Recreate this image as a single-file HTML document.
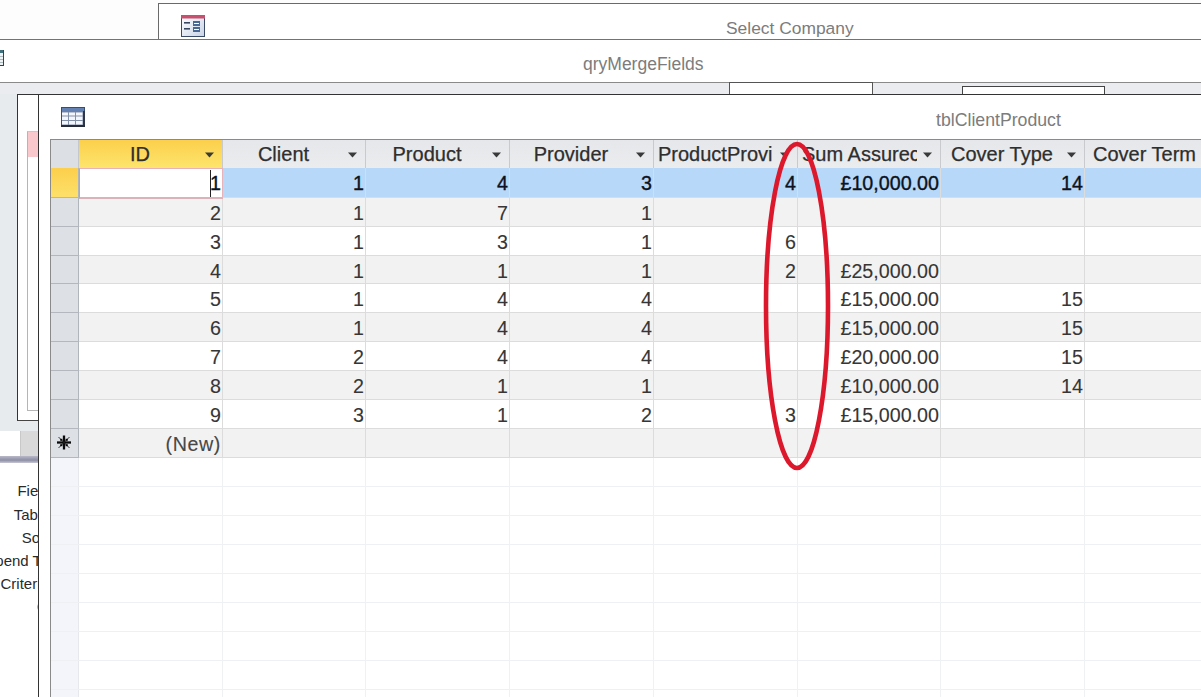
<!DOCTYPE html>
<html><head><meta charset="utf-8"><style>
*{margin:0;padding:0;box-sizing:border-box}
html,body{width:1201px;height:697px;overflow:hidden;background:#fff}
body{position:relative;font-family:"Liberation Sans",sans-serif}
.a{position:absolute}
.t{position:absolute;white-space:nowrap;line-height:1}
.h{font-size:20px;color:#2e2e2e;-webkit-text-stroke:0.25px #2e2e2e}
.d{font-size:19.7px;color:#363636;-webkit-text-stroke:0.1px #363636}
.ds{color:#0c1220;-webkit-text-stroke:0.35px #0c1220}
.ttl{font-size:17.5px;color:#7c7c7c}
</style></head><body>

<div class="a" style="left:0;top:0;width:1201px;height:39px;background:#fdfdfd"></div>
<div class="a" style="left:158px;top:3px;width:1043px;height:36px;background:#fff;border-left:1px solid #6a6a6a;border-top:1px solid #6a6a6a"></div>
<svg class="a" style="left:181px;top:15px" width="24" height="22" viewBox="0 0 24 22">
<defs><linearGradient id="fg" x1="0" y1="0" x2="1" y2="1"><stop offset="0" stop-color="#ffffff"/><stop offset="1" stop-color="#c9d3e6"/></linearGradient></defs>
<rect x="0.5" y="0.5" width="23" height="21" fill="url(#fg)" stroke="#3a4a66"/>
<rect x="0" y="0" width="24" height="3.5" fill="#c8506e"/>
<rect x="3" y="7" width="6" height="1.6" fill="#3a4660"/>
<rect x="3" y="13" width="6" height="1.6" fill="#3a4660"/>
<rect x="12" y="6" width="7" height="5" fill="#4a6894"/><rect x="13" y="8" width="5" height="1" fill="#fff"/>
<rect x="12" y="12" width="7" height="5" fill="#4a6894"/><rect x="13" y="14" width="5" height="1" fill="#fff"/>
</svg>
<div class="t ttl" style="left:726px;top:20px;font-size:17.4px">Select Company</div>
<div class="a" style="left:0;top:39px;width:1201px;height:1px;background:#737373"></div>
<svg class="a" style="left:0;top:50px" width="4" height="16" viewBox="0 0 4 16">
<rect x="0" y="0" width="4" height="16" fill="#eef2f4"/>
<rect x="0" y="0" width="4" height="3" fill="#41707c"/>
<rect x="0" y="6" width="3" height="0.8" fill="#9aaab2"/><rect x="0" y="9" width="3" height="0.8" fill="#9aaab2"/><rect x="0" y="12" width="3" height="0.8" fill="#9aaab2"/>
<rect x="3" y="0" width="1" height="16" fill="#2c4650"/><rect x="0" y="15" width="4" height="1" fill="#2c4650"/>
</svg>
<div class="t ttl" style="left:583px;top:55.5px">qryMergeFields</div>
<div class="a" style="left:0;top:82px;width:1201px;height:1px;background:#8a8a8a"></div>
<div class="a" style="left:0;top:83px;width:1201px;height:11px;background:#eaecef"></div>
<div class="a" style="left:729px;top:82px;width:144px;height:13px;background:#fff;border:1px solid #555"></div>
<div class="a" style="left:962px;top:86px;width:143px;height:9px;background:#fff;border:1px solid #444;border-bottom:none"></div>
<div class="a" style="left:0;top:94px;width:38px;height:337px;background:#e8ebee"></div>
<div class="a" style="left:17px;top:94px;width:22px;height:327px;background:#fff;border-left:1px solid #333;border-top:1px solid #333;border-bottom:1px solid #444"></div>
<div class="a" style="left:27px;top:131px;width:12px;height:280px;border-left:1px solid #b5b5b5;border-top:1px solid #c8c8c8;border-bottom:1px solid #b5b5b5"></div>
<div class="a" style="left:28px;top:132px;width:10px;height:25px;background:#f8c8cc"></div>
<div class="a" style="left:0;top:431px;width:21px;height:25px;background:#fff;border-right:1px solid #c8c8c8"></div>
<div class="a" style="left:21px;top:431px;width:17px;height:25px;background:#d9d9d9"></div>
<div class="a" style="left:0;top:456px;width:38px;height:7px;background:linear-gradient(#b8b8c8,#8e8ea6 60%,#c8c8d4)"></div>
<div class="a" style="left:0;top:463px;width:38px;height:234px;overflow:hidden">
<div class="t" style="left:17.4px;top:20px;font-size:15px;color:#2a2a2a">Field:</div>
<div class="t" style="left:13.7px;top:44px;font-size:15px;color:#2a2a2a">Table:</div>
<div class="t" style="left:21.8px;top:67px;font-size:15px;color:#2a2a2a">Sort:</div>
<div class="t" style="left:-23px;top:90px;font-size:15px;color:#2a2a2a">Append To:</div>
<div class="t" style="left:0.5px;top:113px;font-size:15px;color:#2a2a2a">Criteria:</div>
<div class="t" style="left:37px;top:135px;font-size:15px;color:#2a2a2a">or:</div>
</div>
<div class="a" style="left:38px;top:94px;width:1163px;height:603px;background:#fff;border-left:1px solid #333;border-top:1px solid #333"></div>
<svg class="a" style="left:61px;top:107px" width="24" height="20" viewBox="0 0 24 20">
<rect x="0" y="0" width="24" height="20" fill="#3a4d6e"/>
<rect x="1" y="5" width="21" height="13" fill="#8391a8"/>
<rect x="1" y="1" width="22" height="4" fill="#6381b2"/>
<g fill="#f3f6fc">
<rect x="1" y="5.5" width="6" height="3"/><rect x="8" y="5.5" width="6" height="3"/><rect x="15" y="5.5" width="6.5" height="3"/>
<rect x="1" y="9.5" width="6" height="3.5"/><rect x="8" y="9.5" width="6" height="3.5"/><rect x="15" y="9.5" width="6.5" height="3.5"/>
<rect x="1" y="14" width="6" height="3.5"/><rect x="8" y="14" width="6" height="3.5"/><rect x="15" y="14" width="6.5" height="3.5"/>
</g><rect x="22" y="4" width="2" height="16" fill="#2e3648"/><rect x="0" y="18" width="24" height="2" fill="#262c3a"/></svg>
<div class="t ttl" style="left:936px;top:111.5px;font-size:17.7px">tblClientProduct</div>
<div class="a" style="left:50px;top:139px;width:1151px;height:558px;background:#fff;border-left:1px solid #8a8a8a;border-top:1px solid #8a8a8a"></div>
<div class="a" style="left:51px;top:458px;width:28px;height:239px;background:#f4f5fb;border-right:1px solid #e6e8ee"></div>
<div class="a" style="left:51px;top:140px;width:28px;height:28px;background:#dcdfe4;border-right:1px solid #c4c7cc"></div>
<div class="a" style="left:79px;top:140px;width:144px;height:28px;background:linear-gradient(#fccf4c,#fde56c);border-right:1px solid #c8cacd;overflow:hidden">
<div class="t h" style="left:0;width:122px;text-align:center;top:4px">ID</div>
<svg class="a" style="left:126px;top:12px" width="9" height="6"><path d="M0 0.5H9L4.5 5.5Z" fill="#3a3a3a"/></svg>
</div>
<div class="a" style="left:223px;top:140px;width:143px;height:28px;background:linear-gradient(#e5e7ea,#ebecee);border-right:1px solid #c8cacd;overflow:hidden">
<div class="t h" style="left:0;width:121px;text-align:center;top:4px">Client</div>
<svg class="a" style="left:125px;top:12px" width="9" height="6"><path d="M0 0.5H9L4.5 5.5Z" fill="#3a3a3a"/></svg>
</div>
<div class="a" style="left:366px;top:140px;width:144px;height:28px;background:linear-gradient(#e5e7ea,#ebecee);border-right:1px solid #c8cacd;overflow:hidden">
<div class="t h" style="left:0;width:122px;text-align:center;top:4px">Product</div>
<svg class="a" style="left:126px;top:12px" width="9" height="6"><path d="M0 0.5H9L4.5 5.5Z" fill="#3a3a3a"/></svg>
</div>
<div class="a" style="left:510px;top:140px;width:144px;height:28px;background:linear-gradient(#e5e7ea,#ebecee);border-right:1px solid #c8cacd;overflow:hidden">
<div class="t h" style="left:0;width:122px;text-align:center;top:4px">Provider</div>
<svg class="a" style="left:126px;top:12px" width="9" height="6"><path d="M0 0.5H9L4.5 5.5Z" fill="#3a3a3a"/></svg>
</div>
<div class="a" style="left:654px;top:140px;width:144px;height:28px;background:linear-gradient(#e5e7ea,#ebecee);border-right:1px solid #c8cacd;overflow:hidden">
<div class="a" style="left:0;top:0;width:120px;height:28px;overflow:hidden"><div class="t h" style="left:4px;top:4px">ProductProvi</div></div>
<svg class="a" style="left:126px;top:12px" width="9" height="6"><path d="M0 0.5H9L4.5 5.5Z" fill="#3a3a3a"/></svg>
</div>
<div class="a" style="left:798px;top:140px;width:143px;height:28px;background:linear-gradient(#e5e7ea,#ebecee);border-right:1px solid #c8cacd;overflow:hidden">
<div class="a" style="left:0;top:0;width:119px;height:28px;overflow:hidden"><div class="t h" style="left:4px;top:4px">Sum Assurec</div></div>
<svg class="a" style="left:125px;top:12px" width="9" height="6"><path d="M0 0.5H9L4.5 5.5Z" fill="#3a3a3a"/></svg>
</div>
<div class="a" style="left:941px;top:140px;width:144px;height:28px;background:linear-gradient(#e5e7ea,#ebecee);border-right:1px solid #c8cacd;overflow:hidden">
<div class="t h" style="left:0;width:122px;text-align:center;top:4px">Cover Type</div>
<svg class="a" style="left:126px;top:12px" width="9" height="6"><path d="M0 0.5H9L4.5 5.5Z" fill="#3a3a3a"/></svg>
</div>
<div class="a" style="left:1085px;top:140px;width:144px;height:28px;background:linear-gradient(#e5e7ea,#ebecee);border-right:1px solid #c8cacd;overflow:hidden">
<div class="t h" style="left:0;width:119px;text-align:center;top:4px">Cover Term</div>
</div>
<div class="a" style="left:51px;top:168px;width:28px;height:30px;background:linear-gradient(#fccf4c,#fde06a);border-right:1px solid #b0b4bb;border-bottom:1px solid #b4b8be"></div>
<div class="a" style="left:79px;top:168px;width:1122px;height:30px;background:#b7d8f8;border-bottom:1px solid #dcdcdc"></div>
<div class="a" style="left:222px;top:168px;width:1px;height:30px;background:#dcdcdc"></div>
<div class="a" style="left:365px;top:168px;width:1px;height:30px;background:#dcdcdc"></div>
<div class="a" style="left:509px;top:168px;width:1px;height:30px;background:#dcdcdc"></div>
<div class="a" style="left:653px;top:168px;width:1px;height:30px;background:#dcdcdc"></div>
<div class="a" style="left:797px;top:168px;width:1px;height:30px;background:#dcdcdc"></div>
<div class="a" style="left:940px;top:168px;width:1px;height:30px;background:#dcdcdc"></div>
<div class="a" style="left:1084px;top:168px;width:1px;height:30px;background:#dcdcdc"></div>
<div class="a" style="left:1228px;top:168px;width:1px;height:30px;background:#dcdcdc"></div>
<div class="t d ds" style="right:980px;top:174px">1</div>
<div class="t d ds" style="right:837px;top:174px">1</div>
<div class="t d ds" style="right:693px;top:174px">4</div>
<div class="t d ds" style="right:549px;top:174px">3</div>
<div class="t d ds" style="right:405px;top:174px">4</div>
<div class="t d ds" style="right:262px;top:174px">£10,000.00</div>
<div class="t d ds" style="right:118px;top:174px">14</div>
<div class="a" style="left:51px;top:198px;width:28px;height:29px;background:#dde1e6;border-right:1px solid #b0b4bb;border-bottom:1px solid #b4b8be"></div>
<div class="a" style="left:79px;top:198px;width:1122px;height:29px;background:#f2f2f2;border-bottom:1px solid #dcdcdc"></div>
<div class="a" style="left:222px;top:198px;width:1px;height:29px;background:#dcdcdc"></div>
<div class="a" style="left:365px;top:198px;width:1px;height:29px;background:#dcdcdc"></div>
<div class="a" style="left:509px;top:198px;width:1px;height:29px;background:#dcdcdc"></div>
<div class="a" style="left:653px;top:198px;width:1px;height:29px;background:#dcdcdc"></div>
<div class="a" style="left:797px;top:198px;width:1px;height:29px;background:#dcdcdc"></div>
<div class="a" style="left:940px;top:198px;width:1px;height:29px;background:#dcdcdc"></div>
<div class="a" style="left:1084px;top:198px;width:1px;height:29px;background:#dcdcdc"></div>
<div class="a" style="left:1228px;top:198px;width:1px;height:29px;background:#dcdcdc"></div>
<div class="t d" style="right:980px;top:204px">2</div>
<div class="t d" style="right:837px;top:204px">1</div>
<div class="t d" style="right:693px;top:204px">7</div>
<div class="t d" style="right:549px;top:204px">1</div>
<div class="a" style="left:51px;top:227px;width:28px;height:29px;background:#dde1e6;border-right:1px solid #b0b4bb;border-bottom:1px solid #b4b8be"></div>
<div class="a" style="left:79px;top:227px;width:1122px;height:29px;background:#ffffff;border-bottom:1px solid #dcdcdc"></div>
<div class="a" style="left:222px;top:227px;width:1px;height:29px;background:#dcdcdc"></div>
<div class="a" style="left:365px;top:227px;width:1px;height:29px;background:#dcdcdc"></div>
<div class="a" style="left:509px;top:227px;width:1px;height:29px;background:#dcdcdc"></div>
<div class="a" style="left:653px;top:227px;width:1px;height:29px;background:#dcdcdc"></div>
<div class="a" style="left:797px;top:227px;width:1px;height:29px;background:#dcdcdc"></div>
<div class="a" style="left:940px;top:227px;width:1px;height:29px;background:#dcdcdc"></div>
<div class="a" style="left:1084px;top:227px;width:1px;height:29px;background:#dcdcdc"></div>
<div class="a" style="left:1228px;top:227px;width:1px;height:29px;background:#dcdcdc"></div>
<div class="t d" style="right:980px;top:233px">3</div>
<div class="t d" style="right:837px;top:233px">1</div>
<div class="t d" style="right:693px;top:233px">3</div>
<div class="t d" style="right:549px;top:233px">1</div>
<div class="t d" style="right:405px;top:233px">6</div>
<div class="a" style="left:51px;top:256px;width:28px;height:28px;background:#dde1e6;border-right:1px solid #b0b4bb;border-bottom:1px solid #b4b8be"></div>
<div class="a" style="left:79px;top:256px;width:1122px;height:28px;background:#f2f2f2;border-bottom:1px solid #dcdcdc"></div>
<div class="a" style="left:222px;top:256px;width:1px;height:28px;background:#dcdcdc"></div>
<div class="a" style="left:365px;top:256px;width:1px;height:28px;background:#dcdcdc"></div>
<div class="a" style="left:509px;top:256px;width:1px;height:28px;background:#dcdcdc"></div>
<div class="a" style="left:653px;top:256px;width:1px;height:28px;background:#dcdcdc"></div>
<div class="a" style="left:797px;top:256px;width:1px;height:28px;background:#dcdcdc"></div>
<div class="a" style="left:940px;top:256px;width:1px;height:28px;background:#dcdcdc"></div>
<div class="a" style="left:1084px;top:256px;width:1px;height:28px;background:#dcdcdc"></div>
<div class="a" style="left:1228px;top:256px;width:1px;height:28px;background:#dcdcdc"></div>
<div class="t d" style="right:980px;top:262px">4</div>
<div class="t d" style="right:837px;top:262px">1</div>
<div class="t d" style="right:693px;top:262px">1</div>
<div class="t d" style="right:549px;top:262px">1</div>
<div class="t d" style="right:405px;top:262px">2</div>
<div class="t d" style="right:262px;top:262px">£25,000.00</div>
<div class="a" style="left:51px;top:284px;width:28px;height:29px;background:#dde1e6;border-right:1px solid #b0b4bb;border-bottom:1px solid #b4b8be"></div>
<div class="a" style="left:79px;top:284px;width:1122px;height:29px;background:#ffffff;border-bottom:1px solid #dcdcdc"></div>
<div class="a" style="left:222px;top:284px;width:1px;height:29px;background:#dcdcdc"></div>
<div class="a" style="left:365px;top:284px;width:1px;height:29px;background:#dcdcdc"></div>
<div class="a" style="left:509px;top:284px;width:1px;height:29px;background:#dcdcdc"></div>
<div class="a" style="left:653px;top:284px;width:1px;height:29px;background:#dcdcdc"></div>
<div class="a" style="left:797px;top:284px;width:1px;height:29px;background:#dcdcdc"></div>
<div class="a" style="left:940px;top:284px;width:1px;height:29px;background:#dcdcdc"></div>
<div class="a" style="left:1084px;top:284px;width:1px;height:29px;background:#dcdcdc"></div>
<div class="a" style="left:1228px;top:284px;width:1px;height:29px;background:#dcdcdc"></div>
<div class="t d" style="right:980px;top:290px">5</div>
<div class="t d" style="right:837px;top:290px">1</div>
<div class="t d" style="right:693px;top:290px">4</div>
<div class="t d" style="right:549px;top:290px">4</div>
<div class="t d" style="right:262px;top:290px">£15,000.00</div>
<div class="t d" style="right:118px;top:290px">15</div>
<div class="a" style="left:51px;top:313px;width:28px;height:29px;background:#dde1e6;border-right:1px solid #b0b4bb;border-bottom:1px solid #b4b8be"></div>
<div class="a" style="left:79px;top:313px;width:1122px;height:29px;background:#f2f2f2;border-bottom:1px solid #dcdcdc"></div>
<div class="a" style="left:222px;top:313px;width:1px;height:29px;background:#dcdcdc"></div>
<div class="a" style="left:365px;top:313px;width:1px;height:29px;background:#dcdcdc"></div>
<div class="a" style="left:509px;top:313px;width:1px;height:29px;background:#dcdcdc"></div>
<div class="a" style="left:653px;top:313px;width:1px;height:29px;background:#dcdcdc"></div>
<div class="a" style="left:797px;top:313px;width:1px;height:29px;background:#dcdcdc"></div>
<div class="a" style="left:940px;top:313px;width:1px;height:29px;background:#dcdcdc"></div>
<div class="a" style="left:1084px;top:313px;width:1px;height:29px;background:#dcdcdc"></div>
<div class="a" style="left:1228px;top:313px;width:1px;height:29px;background:#dcdcdc"></div>
<div class="t d" style="right:980px;top:319px">6</div>
<div class="t d" style="right:837px;top:319px">1</div>
<div class="t d" style="right:693px;top:319px">4</div>
<div class="t d" style="right:549px;top:319px">4</div>
<div class="t d" style="right:262px;top:319px">£15,000.00</div>
<div class="t d" style="right:118px;top:319px">15</div>
<div class="a" style="left:51px;top:342px;width:28px;height:29px;background:#dde1e6;border-right:1px solid #b0b4bb;border-bottom:1px solid #b4b8be"></div>
<div class="a" style="left:79px;top:342px;width:1122px;height:29px;background:#ffffff;border-bottom:1px solid #dcdcdc"></div>
<div class="a" style="left:222px;top:342px;width:1px;height:29px;background:#dcdcdc"></div>
<div class="a" style="left:365px;top:342px;width:1px;height:29px;background:#dcdcdc"></div>
<div class="a" style="left:509px;top:342px;width:1px;height:29px;background:#dcdcdc"></div>
<div class="a" style="left:653px;top:342px;width:1px;height:29px;background:#dcdcdc"></div>
<div class="a" style="left:797px;top:342px;width:1px;height:29px;background:#dcdcdc"></div>
<div class="a" style="left:940px;top:342px;width:1px;height:29px;background:#dcdcdc"></div>
<div class="a" style="left:1084px;top:342px;width:1px;height:29px;background:#dcdcdc"></div>
<div class="a" style="left:1228px;top:342px;width:1px;height:29px;background:#dcdcdc"></div>
<div class="t d" style="right:980px;top:348px">7</div>
<div class="t d" style="right:837px;top:348px">2</div>
<div class="t d" style="right:693px;top:348px">4</div>
<div class="t d" style="right:549px;top:348px">4</div>
<div class="t d" style="right:262px;top:348px">£20,000.00</div>
<div class="t d" style="right:118px;top:348px">15</div>
<div class="a" style="left:51px;top:371px;width:28px;height:29px;background:#dde1e6;border-right:1px solid #b0b4bb;border-bottom:1px solid #b4b8be"></div>
<div class="a" style="left:79px;top:371px;width:1122px;height:29px;background:#f2f2f2;border-bottom:1px solid #dcdcdc"></div>
<div class="a" style="left:222px;top:371px;width:1px;height:29px;background:#dcdcdc"></div>
<div class="a" style="left:365px;top:371px;width:1px;height:29px;background:#dcdcdc"></div>
<div class="a" style="left:509px;top:371px;width:1px;height:29px;background:#dcdcdc"></div>
<div class="a" style="left:653px;top:371px;width:1px;height:29px;background:#dcdcdc"></div>
<div class="a" style="left:797px;top:371px;width:1px;height:29px;background:#dcdcdc"></div>
<div class="a" style="left:940px;top:371px;width:1px;height:29px;background:#dcdcdc"></div>
<div class="a" style="left:1084px;top:371px;width:1px;height:29px;background:#dcdcdc"></div>
<div class="a" style="left:1228px;top:371px;width:1px;height:29px;background:#dcdcdc"></div>
<div class="t d" style="right:980px;top:377px">8</div>
<div class="t d" style="right:837px;top:377px">2</div>
<div class="t d" style="right:693px;top:377px">1</div>
<div class="t d" style="right:549px;top:377px">1</div>
<div class="t d" style="right:262px;top:377px">£10,000.00</div>
<div class="t d" style="right:118px;top:377px">14</div>
<div class="a" style="left:51px;top:400px;width:28px;height:29px;background:#dde1e6;border-right:1px solid #b0b4bb;border-bottom:1px solid #b4b8be"></div>
<div class="a" style="left:79px;top:400px;width:1122px;height:29px;background:#ffffff;border-bottom:1px solid #dcdcdc"></div>
<div class="a" style="left:222px;top:400px;width:1px;height:29px;background:#dcdcdc"></div>
<div class="a" style="left:365px;top:400px;width:1px;height:29px;background:#dcdcdc"></div>
<div class="a" style="left:509px;top:400px;width:1px;height:29px;background:#dcdcdc"></div>
<div class="a" style="left:653px;top:400px;width:1px;height:29px;background:#dcdcdc"></div>
<div class="a" style="left:797px;top:400px;width:1px;height:29px;background:#dcdcdc"></div>
<div class="a" style="left:940px;top:400px;width:1px;height:29px;background:#dcdcdc"></div>
<div class="a" style="left:1084px;top:400px;width:1px;height:29px;background:#dcdcdc"></div>
<div class="a" style="left:1228px;top:400px;width:1px;height:29px;background:#dcdcdc"></div>
<div class="t d" style="right:980px;top:406px">9</div>
<div class="t d" style="right:837px;top:406px">3</div>
<div class="t d" style="right:693px;top:406px">1</div>
<div class="t d" style="right:549px;top:406px">2</div>
<div class="t d" style="right:405px;top:406px">3</div>
<div class="t d" style="right:262px;top:406px">£15,000.00</div>
<div class="a" style="left:51px;top:429px;width:28px;height:29px;background:#dde1e6;border-right:1px solid #b0b4bb;border-bottom:1px solid #b4b8be"></div>
<div class="a" style="left:79px;top:429px;width:1122px;height:29px;background:#f2f2f2;border-bottom:1px solid #dcdcdc"></div>
<div class="a" style="left:222px;top:429px;width:1px;height:29px;background:#dcdcdc"></div>
<div class="a" style="left:365px;top:429px;width:1px;height:29px;background:#dcdcdc"></div>
<div class="a" style="left:509px;top:429px;width:1px;height:29px;background:#dcdcdc"></div>
<div class="a" style="left:653px;top:429px;width:1px;height:29px;background:#dcdcdc"></div>
<div class="a" style="left:797px;top:429px;width:1px;height:29px;background:#dcdcdc"></div>
<div class="a" style="left:940px;top:429px;width:1px;height:29px;background:#dcdcdc"></div>
<div class="a" style="left:1084px;top:429px;width:1px;height:29px;background:#dcdcdc"></div>
<div class="a" style="left:1228px;top:429px;width:1px;height:29px;background:#dcdcdc"></div>
<svg class="a" style="left:56px;top:435px" width="16" height="15" viewBox="0 0 16 15"><g stroke="#0a0a0a" stroke-width="2.3"><path d="M8 0.5V14.5"/><path d="M1 7.5H15"/></g><g stroke="#222" stroke-width="0.9"><path d="M2.5 2L13.5 13"/><path d="M13.5 2L2.5 13"/></g><g fill="#0a0a0a"><rect x="4.2" y="3.8" width="2.2" height="2"/><rect x="9.6" y="3.8" width="2.2" height="2"/><rect x="4.2" y="9.2" width="2.2" height="2"/><rect x="9.6" y="9.2" width="2.2" height="2"/></g></svg>
<div class="t d" style="right:980px;top:435px;color:#484848;letter-spacing:0.6px">(New)</div>
<div class="a" style="left:79px;top:168px;width:144px;height:31px;background:#fff;border:1px solid #e6b3ba;border-bottom:2px solid #dcb2ba;border-left:1px solid #b8a8a0"></div>
<div class="t d ds" style="right:980px;top:174px">1</div>
<div class="a" style="left:210px;top:170px;width:1px;height:27px;background:#222"></div>
<div class="a" style="left:51px;top:486px;width:1150px;height:1px;background:#eef0f3"></div>
<div class="a" style="left:51px;top:515px;width:1150px;height:1px;background:#eef0f3"></div>
<div class="a" style="left:51px;top:544px;width:1150px;height:1px;background:#eef0f3"></div>
<div class="a" style="left:51px;top:573px;width:1150px;height:1px;background:#eef0f3"></div>
<div class="a" style="left:51px;top:602px;width:1150px;height:1px;background:#eef0f3"></div>
<div class="a" style="left:51px;top:631px;width:1150px;height:1px;background:#eef0f3"></div>
<div class="a" style="left:51px;top:660px;width:1150px;height:1px;background:#eef0f3"></div>
<div class="a" style="left:51px;top:689px;width:1150px;height:1px;background:#eef0f3"></div>
<div class="a" style="left:222px;top:458px;width:1px;height:239px;background:#f0f1f3"></div>
<div class="a" style="left:365px;top:458px;width:1px;height:239px;background:#f0f1f3"></div>
<div class="a" style="left:509px;top:458px;width:1px;height:239px;background:#f0f1f3"></div>
<div class="a" style="left:653px;top:458px;width:1px;height:239px;background:#f0f1f3"></div>
<div class="a" style="left:797px;top:458px;width:1px;height:239px;background:#f0f1f3"></div>
<div class="a" style="left:940px;top:458px;width:1px;height:239px;background:#f0f1f3"></div>
<div class="a" style="left:1084px;top:458px;width:1px;height:239px;background:#f0f1f3"></div>
<div class="a" style="left:1228px;top:458px;width:1px;height:239px;background:#f0f1f3"></div>
<svg class="a" style="left:0;top:0" width="1201" height="697"><ellipse cx="797" cy="306" rx="31" ry="162" fill="none" stroke="#dc192c" stroke-width="4.6"/></svg>
</body></html>
